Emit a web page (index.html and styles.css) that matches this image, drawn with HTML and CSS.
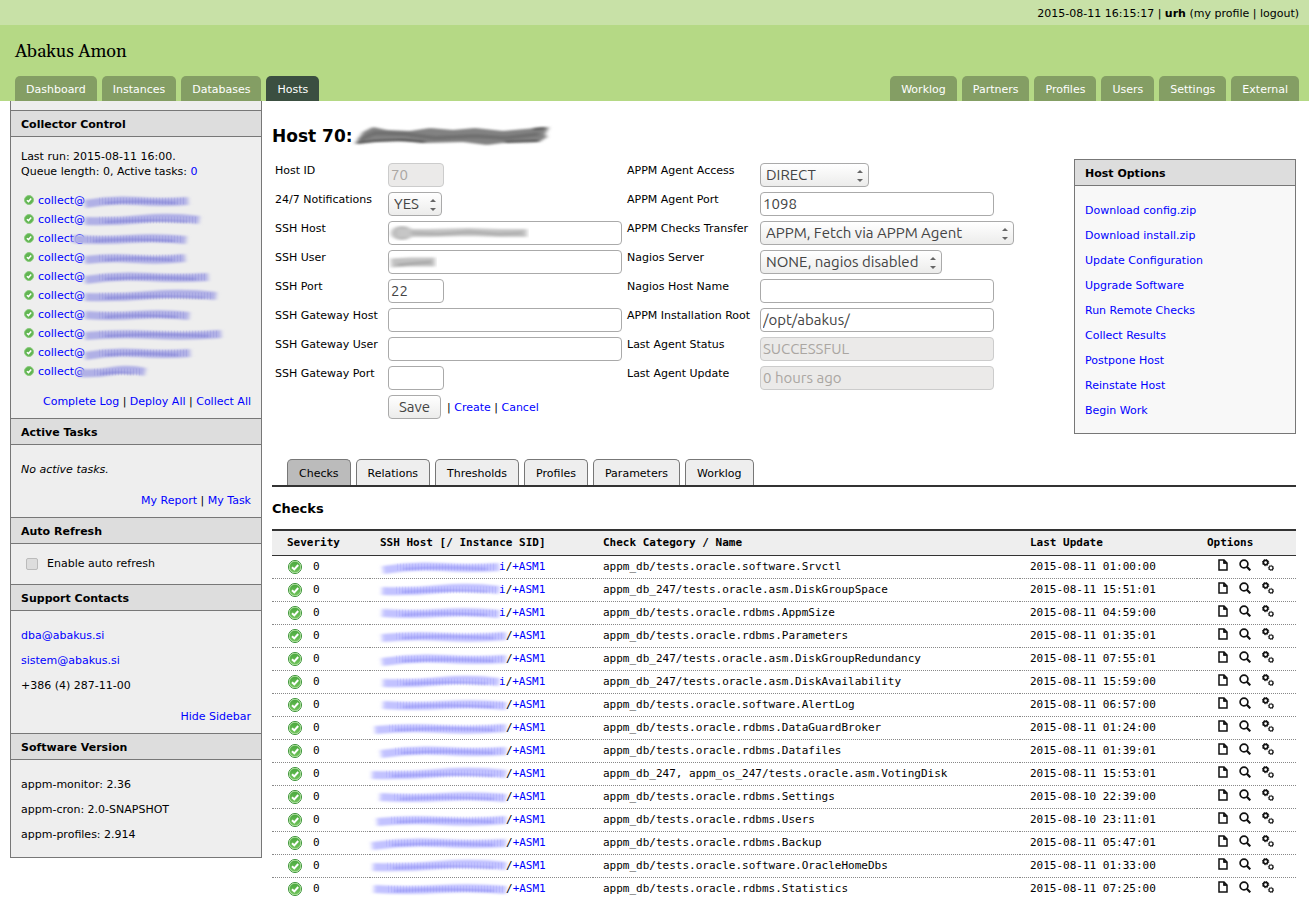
FILE: index.html
```html
<!DOCTYPE html>
<html lang="en">

<head>
  <meta charset="UTF-8">
  <meta name="viewport" content="width=device-width, initial-scale=1.0">
  <title>Abakus Amon - Host 70</title>
  <link rel="stylesheet" href="styles.css">
</head>

<body>
  <!-- Shared icons -->
  <svg class="defs" width="0" height="0" aria-hidden="true">
    <defs>
      <filter id="soft" filterUnits="userSpaceOnUse" x="-30" y="-10" width="260" height="44">
        <feGaussianBlur stdDeviation="2.2 1" />
      </filter>
      <linearGradient id="ok-fill" x1="0" y1="0" x2="0" y2="1">
        <stop offset="0" stop-color="#4aa83e" />
        <stop offset="1" stop-color="#72c45c" />
      </linearGradient>
      <symbol id="icon-ok" viewBox="0 0 14 14">
        <circle cx="7" cy="7" r="6.5" fill="#fff" stroke="#2f8a2b" />
        <circle cx="7" cy="7" r="5.7" fill="url(#ok-fill)" stroke="#a5dc93" stroke-width=".8" />
        <path d="M4 7.2 6.3 9.4 10.2 5" fill="none" stroke="#fff" stroke-width="2" />
      </symbol>
      <symbol id="icon-ok-small" viewBox="0 0 10 10">
        <circle cx="5" cy="5" r="4.5" fill="#62b552" stroke="#8ccb7f" />
        <path d="M2.9 5.2 4.5 6.6 7.2 3.6" fill="none" stroke="#fff" stroke-width="1.5" />
      </symbol>
      <symbol id="icon-page" viewBox="0 0 10 12">
        <path d="M1 1H6L9 4V11H1Z" fill="#fff" stroke="#111" stroke-width="1.5" />
        <path d="M5.5 1V4.5H9" fill="#111" stroke="#111" stroke-width=".8" />
      </symbol>
      <symbol id="icon-search" viewBox="0 0 12 12">
        <circle cx="5" cy="5" r="3.9" fill="none" stroke="#111" stroke-width="1.7" />
        <path d="M7.8 7.8 11.3 11.3" stroke="#111" stroke-width="2.2" />
      </symbol>
      <symbol id="icon-gears" viewBox="0 0 12 12">
        <circle cx="3.6" cy="3.6" r="2.2" fill="none" stroke="#111" stroke-width="1.7" />
        <circle cx="3.6" cy="3.6" r="3.2" fill="none" stroke="#111" stroke-width="1" stroke-dasharray="1.3 1.21" />
        <circle cx="9" cy="9" r="2" fill="none" stroke="#111" stroke-width="1.2" />
        <circle cx="9" cy="9" r="2.7" fill="none" stroke="#111" stroke-width=".7" stroke-dasharray="1 1.12" />
      </symbol>
    </defs>
  </svg>

  <div class="topbar">2015-08-11 16:15:17 | <b>urh</b> (<a href="#">my profile</a> | <a href="#">logout</a>)</div>

  <header class="header">
    <div class="brand">Abakus Amon</div>
    <nav class="nav">
      <a href="#">Dashboard</a>
      <a href="#">Instances</a>
      <a href="#">Databases</a>
      <a href="#" class="active">Hosts</a>
      <a href="#" class="push">Worklog</a>
      <a href="#">Partners</a>
      <a href="#">Profiles</a>
      <a href="#">Users</a>
      <a href="#">Settings</a>
      <a href="#">External</a>
    </nav>
  </header>

  <div class="page">
    <aside class="sidebar">
      <h3>Collector Control</h3>
      <div class="box">
        <p class="run">Last run: 2015-08-11 16:00.<br>Queue length: 0, Active tasks: <a href="#">0</a></p>
        <ul class="collectors" id="collectors"></ul>
        <p class="actions"><a href="#">Complete Log</a> | <a href="#">Deploy All</a> | <a href="#">Collect All</a></p>
      </div>

      <h3>Active Tasks</h3>
      <div class="box">
        <p><i>No active tasks.</i></p>
        <p class="actions"><a href="#">My Report</a> | <a href="#">My Task</a></p>
      </div>

      <h3>Auto Refresh</h3>
      <div class="refresh">
        <input type="checkbox" id="refresh">
        <label for="refresh">Enable auto refresh</label>
      </div>

      <h3>Support Contacts</h3>
      <div class="box">
        <p><a href="#">dba@abakus.si</a></p>
        <p><a href="#">sistem@abakus.si</a></p>
        <p>+386 (4) 287-11-00</p>
        <p class="actions"><a href="#">Hide Sidebar</a></p>
      </div>

      <h3>Software Version</h3>
      <div class="box">
        <p>appm-monitor: 2.36</p>
        <p>appm-cron: 2.0-SNAPSHOT</p>
        <p>appm-profiles: 2.914</p>
      </div>
    </aside>

    <main class="main">
      <h1>Host 70:
        <svg class="host-name" width="196" height="22" viewBox="0 0 196 22" aria-hidden="true">
          <g filter="url(#soft)">
            <path d="M0 19 8 7 18 2 32 5 55 6 75 3 98 5 120 3 148 6 170 4 194 2 190 9 192 12 184 17 155 17 132 20 108 17 70 18 45 16 20 16Z" fill="#828282" />
            <path d="M4 15 20 8 50 9 80 13 120 11 150 13 184 9" fill="none" stroke="#707070" stroke-width="4" />
            <path d="M2 18 20 16 48 15 70 17M150 17 184 16M178 4 190 3" fill="none" stroke="#444" stroke-width="2" />
          </g>
        </svg>
      </h1>

      <div class="host">
        <form class="form">
          <div class="fields">
            <label for="host-id">Host ID</label>
            <input type="text" id="host-id" class="short" value="70" disabled>
            <label for="notify">24/7 Notifications</label>
            <span class="select"><select id="notify" class="short">
                <option>YES</option>
              </select></span>
            <label for="ssh-host">SSH Host</label>
            <span class="hidden-value">
              <input type="text" id="ssh-host">
              <svg width="140" height="16" viewBox="0 0 140 16" aria-hidden="true">
                <g filter="url(#soft)" fill="none">
                  <ellipse cx="13" cy="8" rx="11" ry="7" fill="#bbb" />
                  <path d="M8 8 40 8 80 7 110 8 138 8" stroke="#c6c6c6" stroke-width="8" />
                  <path d="M22 8 50 9 80 7 110 9 134 8" stroke="#b0b0b0" stroke-width="3" />
                </g>
              </svg>
            </span>
            <label for="ssh-user">SSH User</label>
            <span class="hidden-value">
              <input type="text" id="ssh-user">
              <svg width="48" height="16" viewBox="0 0 48 16" aria-hidden="true">
                <g filter="url(#soft)" fill="none">
                  <path d="M2 9 20 8 46 8" stroke="#c2c2c2" stroke-width="9" />
                  <path d="M8 11 28 9 43 8" stroke="#999" stroke-width="3" opacity=".6" />
                </g>
              </svg>
            </span>
            <label for="ssh-port">SSH Port</label>
            <input type="text" id="ssh-port" class="short" value="22">
            <label for="gw-host">SSH Gateway Host</label>
            <input type="text" id="gw-host">
            <label for="gw-user">SSH Gateway User</label>
            <input type="text" id="gw-user">
            <label for="gw-port">SSH Gateway Port</label>
            <input type="text" id="gw-port" class="short">
            <div class="buttons">
              <button type="button">Save</button>
              <span>| <a href="#">Create</a> | <a href="#">Cancel</a></span>
            </div>
          </div>

          <div class="fields agent">
            <label for="access">APPM Agent Access</label>
            <span class="select"><select id="access" class="medium">
                <option>DIRECT</option>
              </select></span>
            <label for="agent-port">APPM Agent Port</label>
            <input type="text" id="agent-port" value="1098">
            <label for="transfer">APPM Checks Transfer</label>
            <span class="select"><select id="transfer" class="wide">
                <option>APPM, Fetch via APPM Agent</option>
              </select></span>
            <label for="nagios">Nagios Server</label>
            <span class="select"><select id="nagios" class="large">
                <option>NONE, nagios disabled</option>
              </select></span>
            <label for="nagios-name">Nagios Host Name</label>
            <input type="text" id="nagios-name">
            <label for="root">APPM Installation Root</label>
            <input type="text" id="root" value="/opt/abakus/">
            <label for="status">Last Agent Status</label>
            <input type="text" id="status" value="SUCCESSFUL" disabled>
            <label for="update">Last Agent Update</label>
            <input type="text" id="update" value="0 hours ago" disabled>
          </div>
        </form>

        <section class="options">
          <h3>Host Options</h3>
          <div class="box">
            <p><a href="#">Download config.zip</a></p>
            <p><a href="#">Download install.zip</a></p>
            <p><a href="#">Update Configuration</a></p>
            <p><a href="#">Upgrade Software</a></p>
            <p><a href="#">Run Remote Checks</a></p>
            <p><a href="#">Collect Results</a></p>
            <p><a href="#">Postpone Host</a></p>
            <p><a href="#">Reinstate Host</a></p>
            <p><a href="#">Begin Work</a></p>
          </div>
        </section>
      </div>

      <nav class="tabs">
        <a href="#" class="active">Checks</a>
        <a href="#">Relations</a>
        <a href="#">Thresholds</a>
        <a href="#">Profiles</a>
        <a href="#">Parameters</a>
        <a href="#">Worklog</a>
      </nav>

      <h2>Checks</h2>
      <table class="checks">
        <thead>
          <tr>
            <th class="severity">Severity</th>
            <th class="ssh">SSH Host [/ Instance SID]</th>
            <th>Check Category / Name</th>
            <th class="date">Last Update</th>
            <th class="opts">Options</th>
          </tr>
        </thead>
        <tbody id="checks"></tbody>
      </table>
    </main>
  </div>

  <script>
    // [start, end] of the hidden host name after "collect@"
    const collectors = [[0, 103], [0, 114], [-12, 101], [0, 100], [0, 123], [0, 131], [0, 104], [0, 136], [0, 105], [-5, 60]];

    // [check name, last update, start of the hidden host name, last letter]
    const checks = [
      ['appm_db/tests.oracle.software.Srvctl', '2015-08-11 01:00:00', 1, 'i'],
      ['appm_db_247/tests.oracle.asm.DiskGroupSpace', '2015-08-11 15:51:01', 0, 'i'],
      ['appm_db/tests.oracle.rdbms.AppmSize', '2015-08-11 04:59:00', 0, 'i'],
      ['appm_db/tests.oracle.rdbms.Parameters', '2015-08-11 01:35:01', 0, ''],
      ['appm_db_247/tests.oracle.asm.DiskGroupRedundancy', '2015-08-11 07:55:01', 0, ''],
      ['appm_db_247/tests.oracle.asm.DiskAvailability', '2015-08-11 15:59:00', 1, 'i'],
      ['appm_db/tests.oracle.software.AlertLog', '2015-08-11 06:57:00', 1, ''],
      ['appm_db/tests.oracle.rdbms.DataGuardBroker', '2015-08-11 01:24:00', -7, ''],
      ['appm_db/tests.oracle.rdbms.Datafiles', '2015-08-11 01:39:01', -1, ''],
      ['appm_db_247, appm_os_247/tests.oracle.asm.VotingDisk', '2015-08-11 15:53:01', -10, ''],
      ['appm_db/tests.oracle.rdbms.Settings', '2015-08-10 22:39:00', -2, ''],
      ['appm_db/tests.oracle.rdbms.Users', '2015-08-10 23:11:01', -5, ''],
      ['appm_db/tests.oracle.rdbms.Backup', '2015-08-11 05:47:01', -10, ''],
      ['appm_db/tests.oracle.software.OracleHomeDbs', '2015-08-11 01:33:00', -9, ''],
      ['appm_db/tests.oracle.rdbms.Statistics', '2015-08-11 07:25:00', -8, '']
    ];

    function icon(name) {
      return `<svg class="icon icon-${name}" aria-hidden="true"><use href="#icon-${name}"/></svg>`;
    }

    function smudge(start, end, width, i, color, dark) {
      const step = (end - start) / 4;
      const wave = [[9, 4, 6, 7, 6], [7, 8, 5, 7, 6], [6, 8, 6, 5, 7], [8, 5, 7, 6, 6]][i % 4];
      const at = n => `${start + step * n} ${wave[n]}`;
      return `<svg class="smudge" width="${width}" height="12" aria-hidden="true"><g filter="url(#soft)" fill="none">
        <path d="M${at(0)} Q${at(1)} ${at(2)} T${at(4)}" stroke="${color}" stroke-width="8"/>
        <path d="M${start + 20} 8 Q${start + step * 2} 5 ${end - 12} 8" stroke="${dark}" stroke-width="2" opacity=".5"/>
        </g><path d="M${start + 14} 6H${end - 3}" stroke="${dark}" stroke-width="7" stroke-dasharray="1 2" opacity=".13"/></svg>`;
    }

    document.getElementById('collectors').innerHTML = collectors.map(([start, end], i) =>
      `<li>${icon('ok-small')}<a href="#">collect@${smudge(start, end, 136, i, '#b0b0e6', '#6868cf')}</a></li>`).join('');

    document.getElementById('checks').innerHTML = checks.map(([name, date, start, last], i) => {
      const width = last ? 119 : 126;
      return `<tr>
        <td class="severity">${icon('ok')}0</td>
        <td><a href="#">${smudge(start + 2, width, width, i, '#c2c2ff', '#7777f0')}${last}</a>/<a href="#">+ASM1</a></td>
        <td>${name}</td>
        <td>${date}</td>
        <td><span class="row-icons"><a href="#" aria-label="Report">${icon('page')}</a><a href="#" aria-label="Details">${icon('search')}</a><a href="#" aria-label="Configure">${icon('gears')}</a></span></td>
      </tr>`;
    }).join('');
  </script>
</body>

</html>
```
FILE: styles.css
```css
* {
  box-sizing: border-box;
}

body {
  margin: 0;
  font-family: "DejaVu Sans", Verdana, sans-serif;
  font-size: 11px;
  line-height: 15px;
  background: #fff;
  color: #000;
}

a {
  color: #00f;
  text-decoration: none;
}

p,
h1,
h2,
h3 {
  margin: 0;
}

.defs {
  position: absolute;
}

/* Header */
.topbar {
  padding: 6px 10px 4px;
  text-align: right;
  background: #c8e1a7;
}

.topbar a {
  color: #000;
}

.header {
  background: #b5d985;
}

.brand {
  padding: 15px 15px 12px;
  font-family: Gelasio, Georgia, "Liberation Serif", serif;
  font-size: 18px;
  line-height: 24px;
}

.nav {
  display: flex;
  gap: 5px;
  padding: 0 10px 0 15px;
}

.nav a {
  padding: 6px 11px 4px;
  border-radius: 5px 5px 0 0;
  background: #849e64;
  color: #fff;
}

.nav a.active {
  background: #3b4f41;
}

.nav .push {
  margin-left: auto;
}

/* Page */
.page {
  display: flex;
  align-items: flex-start;
  gap: 10px;
  padding: 0 13px 0 10px;
}

.sidebar {
  flex: 0 0 252px;
  padding-top: 9px;
  border: 1px solid #777;
  border-top: none;
  background: #eee;
}

h3 {
  padding: 6px 10px 4px;
  border: solid #777;
  border-width: 1px 0;
  background: #ddd;
  font-size: 11px;
  line-height: 15px;
}

.box {
  display: flex;
  flex-direction: column;
  gap: 10px;
  padding: 17px 10px 15px;
}

.box .actions {
  margin-top: 6px;
  text-align: right;
}

.box:has(.actions) {
  padding-bottom: 9px;
}

.box .run {
  margin-top: -5px;
}

.collectors {
  margin: 2px 0 -3px;
  padding: 0 0 0 3px;
  list-style: none;
}

.collectors li {
  display: flex;
  align-items: center;
  gap: 4px;
  height: 19px;
}

.icon-ok-small {
  width: 10px;
  height: 10px;
  margin-bottom: 2px;
}

.collectors a {
  display: flex;
  align-items: center;
}

.smudge {
  overflow: visible;
}

.refresh {
  display: flex;
  align-items: center;
  gap: 9px;
  padding: 12px 15px 13px;
}

.refresh input {
  appearance: none;
  width: 12px;
  height: 12px;
  margin: 0;
  border: 1px solid #bbb;
  border-radius: 2px;
  background: #ddd;
}

/* Host form */
.main {
  flex: 1;
  min-width: 0;
}

h1 {
  display: flex;
  align-items: center;
  gap: 2px;
  padding-top: 24px;
  font-size: 17px;
  line-height: 22px;
}

.host-name {
  overflow: visible;
}

.host {
  display: flex;
  justify-content: space-between;
  align-items: flex-start;
  margin-top: 12px;
}

.form {
  display: flex;
  align-items: flex-start;
  gap: 5px;
  padding: 4px 3px 0;
}

.fields {
  display: grid;
  grid-template-columns: 108px 234px;
  grid-auto-rows: 24px;
  gap: 5px;
}

.fields.agent {
  grid-template-columns: 128px 254px;
}

.fields label {
  white-space: nowrap;
}

.fields input,
.fields select,
.fields button {
  height: 24px;
  margin: 0;
  border: 1px solid #aaa;
  border-radius: 4px;
  font-family: Ubuntu, "Noto Sans", sans-serif;
  font-size: 15px;
  color: #444;
}

.fields input {
  width: 234px;
  padding: 0 2px 2px;
  background: #fff;
}

.fields input.short {
  width: 56px;
}

.fields input:disabled {
  border-color: #ccc;
  background: #ebeae9;
  color: #aaa6a2;
}

.select {
  position: relative;
  justify-self: start;
}

.fields select {
  appearance: none;
  padding: 0 5px 2px;
  background: linear-gradient(#fff, #ececeb);
}

.select::before,
.select::after {
  content: "";
  position: absolute;
  right: 6px;
  top: 7px;
  border: solid transparent;
  border-width: 0 3px 3px;
  border-bottom-color: #666;
}

.select::after {
  top: 16px;
  border-width: 3px 3px 0;
  border-top-color: #666;
}

select.short {
  width: 54px;
}

select.medium {
  width: 109px;
}

select.large {
  width: 182px;
}

select.wide {
  width: 254px;
}

.hidden-value {
  position: relative;
}

.hidden-value svg {
  position: absolute;
  left: 1px;
  top: 4px;
}

.buttons {
  grid-column: 2;
  display: flex;
  align-items: center;
  gap: 6px;
}

.fields button {
  width: 53px;
  padding: 0 0 2px;
  background: linear-gradient(#fff, #ececeb);
}

.options {
  flex: 0 0 222px;
  border: 1px solid #777;
  background: #f8f8f8;
}

.options h3 {
  border-top: none;
}

/* Tabs */
.tabs {
  display: flex;
  gap: 5px;
  margin-top: 25px;
  padding-left: 15px;
  border-bottom: 2px solid #333;
}

.tabs a {
  padding: 6px 11px 4px;
  border: 1px solid #777;
  border-bottom: none;
  border-radius: 5px 5px 0 0;
  background: #eee;
  color: #000;
}

.tabs a.active {
  background: #bbb;
}

h2 {
  padding: 14px 0 13px;
  font-size: 13px;
  line-height: 15px;
}

/* Checks table */
.checks {
  width: 100%;
  border-collapse: collapse;
  border-top: 2px solid #333;
  table-layout: fixed;
  font-family: "DejaVu Sans Mono", monospace;
  font-size: 11px;
}

.checks tr {
  border-bottom: 1px dotted #888;
}

.checks thead tr {
  border-bottom: 1px solid #333;
  background: #eee;
}

.checks tbody tr:last-child {
  border-bottom: none;
}

.checks th,
.checks td {
  height: 23px;
  padding: 0 0 1px 10px;
  text-align: left;
  white-space: nowrap;
}

.checks th {
  height: 25px;
  padding-bottom: 0;
}

.checks .severity {
  width: 98px;
  padding-left: 15px;
}

.checks .ssh {
  width: 223px;
}

.checks .date {
  width: 177px;
}

.checks .opts {
  width: 99px;
}

.icon-ok {
  width: 14px;
  height: 14px;
  margin: 0 11px 0 1px;
  vertical-align: middle;
}

.checks .smudge {
  vertical-align: middle;
}

.row-icons {
  display: flex;
  gap: 11px;
  padding: 0 0 2px 11px;
}

.row-icons a {
  display: flex;
}

.row-icons .icon {
  width: 12px;
  height: 12px;
}

.row-icons .icon-page {
  width: 10px;
}
```
